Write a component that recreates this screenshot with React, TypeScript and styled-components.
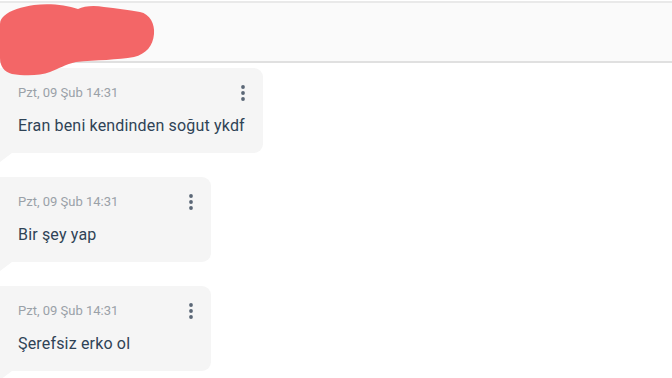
import React from 'react';
import styled, { createGlobalStyle } from 'styled-components';

const GlobalStyle = createGlobalStyle`
  html, body {
    margin: 0;
    padding: 0;
    background: #ffffff;
    font-family: Roboto, "Liberation Sans", Arial, sans-serif;
  }
`;

const Page = styled.div`
  width: 672px;
  height: 378px;
  overflow: hidden;
  position: relative;
  background: #ffffff;
`;

const Header = styled.header`
  position: relative;
  margin-top: 1px;
  height: 58px;
  background: #fafafa;
  border-top: 2px solid #e9e9e9;
  border-bottom: 2px solid #e0e0e0;
`;

const Redaction = styled.svg`
  position: absolute;
  left: 0;
  top: 2px;
  z-index: 2;
`;

const MessageList = styled.div`
  display: flex;
  flex-direction: column;
  align-items: flex-start;
  gap: 24px;
  padding-top: 5px;
`;

const Bubble = styled.div<{ $minWidth?: number }>`
  position: relative;
  box-sizing: border-box;
  min-width: ${({ $minWidth }) => $minWidth ?? 211}px;
  height: 85px;
  padding: 17px 18px 0 18px;
  background: #f5f5f5;
  border-radius: 0 9px 9px 0;

  &::after {
    content: '';
    position: absolute;
    left: 0;
    bottom: -9px;
    width: 0;
    height: 0;
    border-top: 9px solid #f5f5f5;
    border-right: 12px solid transparent;
  }
`;

const MetaRow = styled.div`
  display: flex;
  align-items: center;
  justify-content: space-between;
  gap: 24px;
  height: 16px;
`;

const DateText = styled.span`
  font-size: 13px;
  line-height: 16px;
  color: #9aa1a8;
`;

const MenuButton = styled.span`
  display: flex;
  width: 10px;
  justify-content: center;
  margin-right: -3px;
`;

const MessageText = styled.div`
  margin-top: 15px;
  font-size: 16px;
  letter-spacing: 0.17px;
  line-height: 20px;
  color: #2f4356;
  white-space: nowrap;
`;

const Kebab = () => (
  <svg width="6" height="18" viewBox="0 0 6 18">
    <circle cx="3" cy="3" r="1.9" fill="#5b6776" />
    <circle cx="3" cy="9" r="1.9" fill="#5b6776" />
    <circle cx="3" cy="15" r="1.9" fill="#5b6776" />
  </svg>
);

const messages = [
  { date: 'Pzt, 09 Şub 14:31', text: 'Eran beni kendinden soğut ykdf' },
  { date: 'Pzt, 09 Şub 14:31', text: 'Bir şey yap' },
  { date: 'Pzt, 09 Şub 14:31', text: 'Şerefsiz erko ol' },
];

export default function App() {
  return (
    <Page>
      <GlobalStyle />
      <Redaction width="160" height="74" viewBox="0 0 160 74">
        <path
          d="M4 14 C10 8 22 5 34 3 C50 1 66 3 78 7 C84 4 94 3 104 5 C116 6 128 8 140 10 C150 12 155 22 154 32 C153 44 146 52 134 55 C118 58 96 58 76 60 C66 62 58 67 50 70 C40 74 24 74 12 72 C4 70 0 64 0 56 L0 22 C0 18 2 16 4 14 Z"
          fill="#f36667"
        />
      </Redaction>
      <Header />
      <MessageList>
        {messages.map((m, i) => (
          <Bubble key={i}>
            <MetaRow>
              <DateText>{m.date}</DateText>
              <MenuButton>
                <Kebab />
              </MenuButton>
            </MetaRow>
            <MessageText>{m.text}</MessageText>
          </Bubble>
        ))}
      </MessageList>
    </Page>
  );
}
